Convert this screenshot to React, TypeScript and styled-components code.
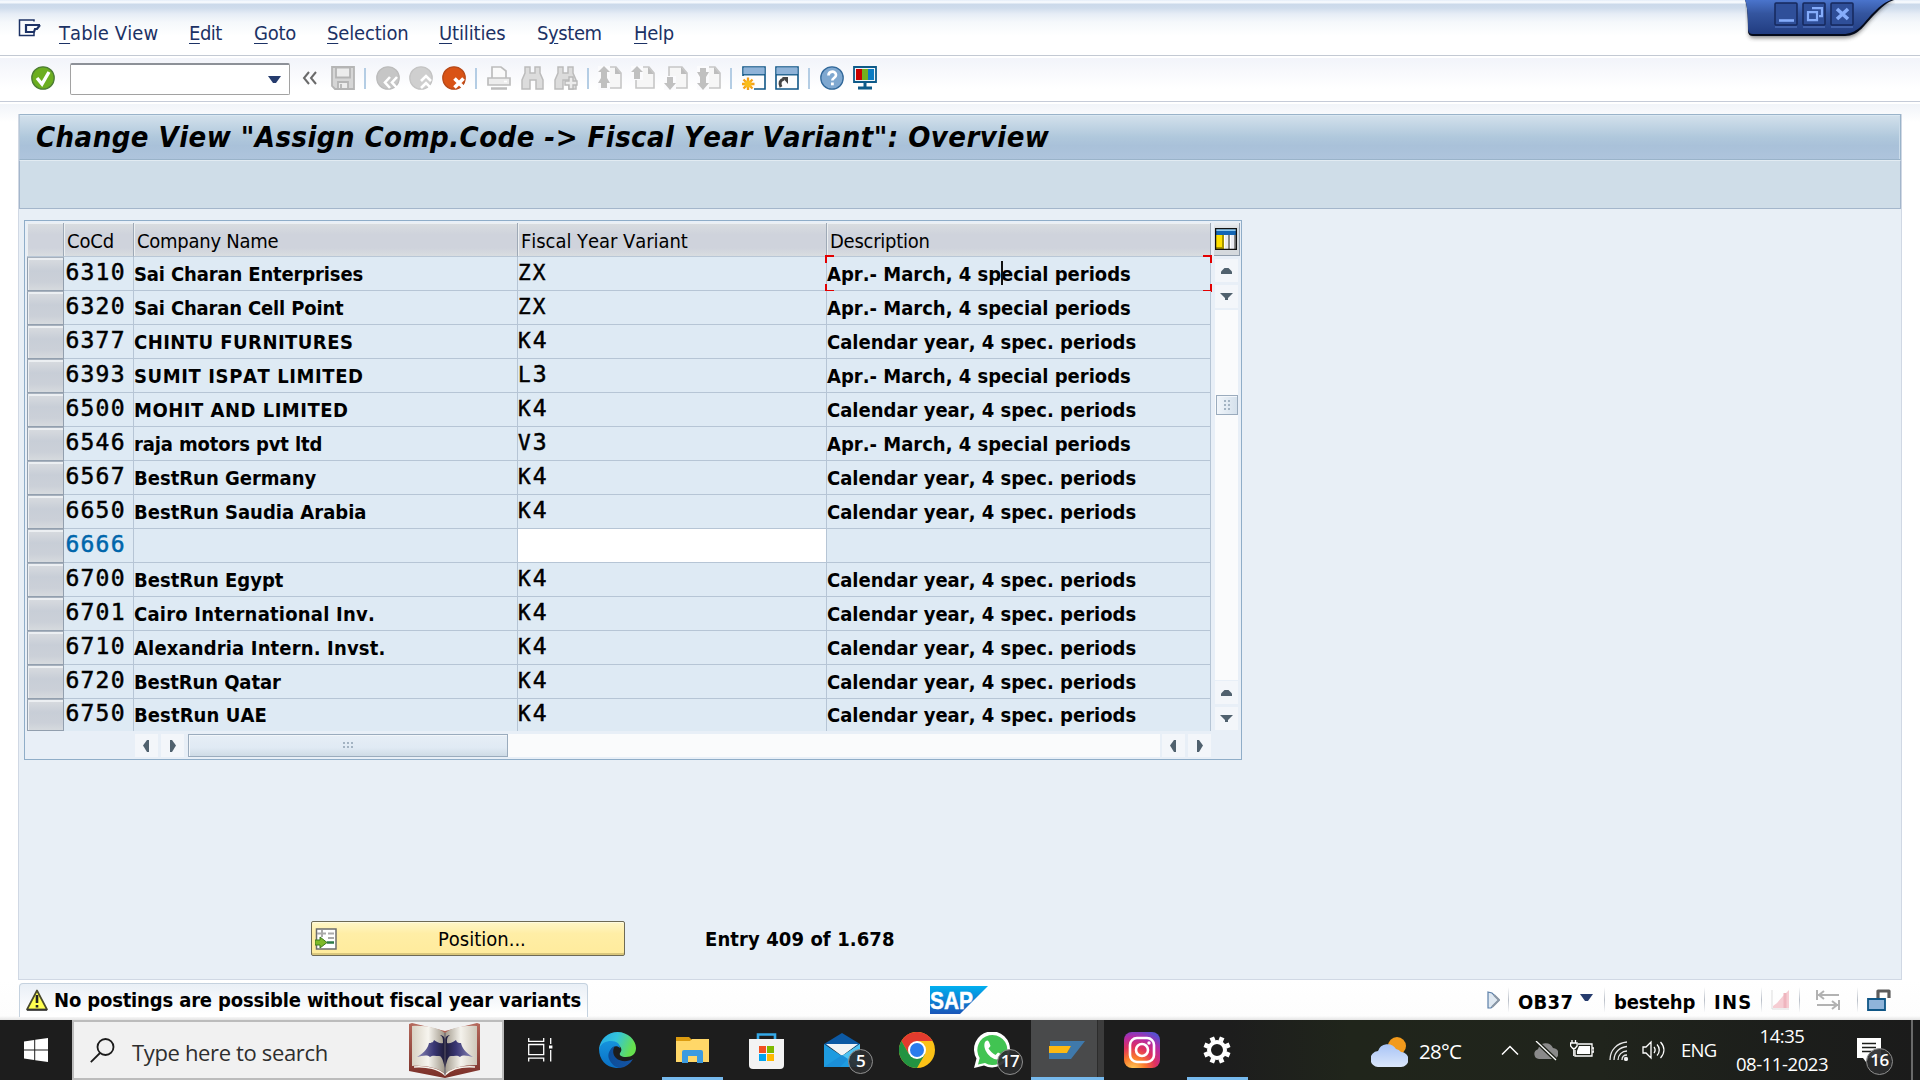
import React from 'react';
import styled, { createGlobalStyle, css } from 'styled-components';

const Global = createGlobalStyle`
  * { box-sizing: border-box; }
  html, body { margin: 0; padding: 0; }
  body { width: 1920px; height: 1080px; overflow: hidden; background: #fff; }
  svg { display: block; flex: none; }
`;

const ui = css`
  font-family: 'DejaVu Sans Condensed', 'DejaVu Sans', sans-serif;
  font-stretch: condensed;
  font-kerning: none;
  font-size: 20px;
  line-height: 24px;
  white-space: pre;
`;

const Screen = styled.div`
  position: relative;
  width: 1920px;
  height: 1080px;
  display: flex;
  flex-direction: column;
  overflow: hidden;
  ${ui}
  color: #000;
`;

/* ---------- menu bar ---------- */
const MenuBar = styled.nav`
  height: 58px;
  padding: 21px 0 0 18px;
  display: flex;
  border-bottom: 2px solid #fff;
  box-shadow: inset 0 -1px 0 #c3c9d3;
  background: linear-gradient(#dfe9f7 0, #f4f8fd 1px, #f4f8fd 3px, #cbd9ea 4px, #cfdcec 8px, #e6edf6 14px, #f5f8fb 22px, #fff 36px);
  color: #1c3265;
`;
const MenuIcon = styled.div`
  width: 41px;
  margin-top: -2px;
`;
const MenuItem = styled.span<{ $w: number; $ls: number }>`
  width: ${p => p.$w}px;
  letter-spacing: ${p => p.$ls}px;
  u { text-underline-offset: 3px; text-decoration-thickness: 1px; }
`;

/* ---------- standard toolbar ---------- */
const Toolbar = styled.div`
  height: 46px;
  padding: 0 0 4px 31px;
  display: flex;
  align-items: center;
  border-bottom: 2px solid #fff;
  box-shadow: inset 0 -1px 0 #c5cbd8;
  background: linear-gradient(#f2f4fa, #fff 70%);
`;
const CommandField = styled.div`
  width: 220px;
  height: 32px;
  margin: 1px 12px 0 15px;
  padding-right: 8px;
  display: flex;
  align-items: center;
  justify-content: flex-end;
  border: 1px solid #a2a2a2;
  border-top: 2px solid #8d9198;
  border-radius: 2px;
  background: #fff;
`;
const Tool = styled.div<{ $ml?: number }>`
  width: 24px;
  height: 24px;
  margin-left: ${p => p.$ml ?? 9}px;
`;
const Sep = styled.i`
  width: 2px;
  height: 21px;
  margin: 0 1px 0 9px;
  background: #b4cde4;
`;

/* ---------- work area ---------- */
const Work = styled.main`
  height: 876px;
  padding: 10px 18px 0 18px;
  background: linear-gradient(#f1f4f9, #fff 18px);
`;
const Panel = styled.section`
  width: 1884px;
  height: 866px;
  border: 1px solid #d0d8e4;
  border-top: 0;
  background: #e8eff6;
  display: flex;
  flex-direction: column;
`;
const Title = styled.h1`
  margin: 0;
  height: 46px;
  padding: 9px 0 0 16px;
  border: 1px solid #9ab3c9;
  border-left-color: #b7c8d8;
  box-shadow: inset 0 1px 0 #d9e7f2, inset -1px 0 0 #cbdcea;
  background: linear-gradient(#d3e1ec, #b0c8dc 50%, #a9c1d9 70%, #aec4dc);
  font-size: 29px;
  line-height: 26px;
  font-weight: bold;
  font-style: italic;
  letter-spacing: 0.45px;
`;
const AppBar = styled.div`
  height: 49px;
  border: 1px solid #a4b6cb;
  border-top-color: #e2ebf2;
  background: #cfdde8;
`;

/* ---------- table control ---------- */
const TableBox = styled.div`
  width: 1218px;
  height: 540px;
  margin: 11px 0 0 5px;
  padding: 2px 1px 0 2px;
  border: 1px solid #8fadc8;
  display: flex;
  background: #e8eff7;
`;
const TableMain = styled.div`
  width: 1184px;
`;
const Row = styled.div<{ $h?: number }>`
  display: grid;
  grid-template-columns: 37px 70px 384px 309px 384px;
  height: ${p => p.$h ?? 34}px;
`;
const Head = styled.div<{ $ls?: number }>`
  height: 34px;
  padding: 6px 0 0 3px;
  border-right: 1px solid #9ea9b6;
  border-bottom: 1px solid #b9c7d6;
  box-shadow: inset 1px 1px 0 #eceff1;
  background: linear-gradient(#d9dde0, #cfd3dc 35%, #cfd3dc 75%, #d9dde0);
  letter-spacing: ${p => p.$ls ?? -0.25}px;
`;
const Selector = styled.div`
  border: 1px solid #929fae;
  border-top-color: #a7b1bd;
  box-shadow: inset 1px 2px 0 #eceff2;
  background: linear-gradient(#d9dce0, #c8ced7 40%, #cbd0d8 75%, #d6dade);
`;
const Cell = styled.div<{ $white?: boolean; $last?: boolean; $ls?: number }>`
  position: relative;
  padding: ${p => (p.$last ? 4 : 5)}px 0 0 0;
  border-right: 1px solid #b6c5d5;
  border-bottom: ${p => (p.$last ? 0 : 1)}px solid #b6c5d5;
  background: ${p => (p.$white ? '#fff' : '#deeaf4')};
  font-weight: bold;
  letter-spacing: ${p => p.$ls ?? 0}px;
`;
const Code = styled(Cell)<{ $blue?: boolean; $pl?: number }>`
  padding: ${p => (p.$last ? 2 : 3)}px 0 0 ${p => p.$pl ?? 1}px;
  font: 23px/24px 'DejaVu Sans Mono', monospace;
  letter-spacing: 1.2px;
  color: ${p => (p.$blue ? '#0066ab' : '#000')};
  -webkit-text-stroke: 0.5px currentColor;
  span { font-size: 21px; letter-spacing: 2.1px; }
`;
const Corner = styled.i<{ $r?: boolean; $b?: boolean }>`
  position: absolute;
  width: 9px;
  height: 8px;
  ${p => (p.$r ? 'right: -2px; border-right: 2px solid #e30000;' : 'left: -2px; border-left: 2px solid #e30000;')}
  ${p => (p.$b ? 'bottom: -2px; border-bottom: 2px solid #e30000;' : 'top: -2px; border-top: 2px solid #e30000;')}
`;
const Caret = styled.i`
  position: absolute;
  left: 174px;
  top: 4px;
  width: 2px;
  height: 24px;
  background: #111;
`;
const HScroll = styled.div`
  height: 23px;
  margin: 3px 0 0 108px;
  display: flex;
  align-items: center;
`;
const Arrow = styled.div<{ $ml?: number; $mt?: number }>`
  width: 23px;
  height: 23px;
  margin-left: ${p => p.$ml ?? 0}px;
  margin-top: ${p => p.$mt ?? 0}px;
  padding: 3px 0 0 4px;
  background: #f3f6fa;
  flex: none;
`;
const HTrack = styled.div`
  width: 972px;
  height: 23px;
  margin-left: 4px;
  background: #fafbfc;
`;
const thumb = css`
  display: flex;
  align-items: center;
  justify-content: center;
  border: 1px solid #9aabbd;
  box-shadow: inset 1px 1px 0 #f2f6fa;
`;
const HThumb = styled.div`
  ${thumb}
  width: 320px;
  height: 23px;
  background: linear-gradient(#e6eef6, #e0eaf4 60%, #cedbe6);
`;
const VColumn = styled.div`
  width: 28px;
  margin-left: 3px;
`;
const Config = styled.div`
  width: 26px;
  height: 33px;
  padding: 5px 0 0 1px;
  border-right: 1px solid #929fae;
  border-bottom: 1px solid #929fae;
  background: linear-gradient(#eceff2, #d5d9dd 20%);
`;
const VTrack = styled.div`
  width: 23px;
  height: 370px;
  margin: 2px 0 0 1px;
  padding: 85px 0 0 1px;
  background: #fafbfc;
`;
const VThumb = styled.div`
  ${thumb}
  width: 22px;
  height: 20px;
  background: linear-gradient(90deg, #f0f5fa, #d5e1ec);
`;

/* ---------- footer of panel ---------- */
const Footer = styled.div`
  display: flex;
  margin: 161px 0 0 292px;
  align-items: center;
`;
const PositionButton = styled.div`
  width: 314px;
  height: 35px;
  padding-left: 3px;
  display: flex;
  align-items: center;
  border: 1px solid #6e6a55;
  border-radius: 2px;
  box-shadow: inset 0 1px 0 #fffbe0, inset 0 -2px 0 #d9c67c;
  background: linear-gradient(#fff6c8, #ffeea6 35%, #ffeb9c);
`;
const PositionText = styled.span`
  margin-left: 101px;
`;
const Entry = styled.b`
  margin-left: 80px;
  letter-spacing: 0.1px;
`;

/* ---------- status bar ---------- */
const StatusBar = styled.div`
  height: 40px;
  padding: 3px 0 0 19px;
  display: flex;
  background: linear-gradient(#fff, #fdfdfd 90%, #e4e4e4);
`;
const Message = styled.div`
  width: 569px;
  height: 34px;
  padding: 4px 0 0 6px;
  display: flex;
  border: 1px solid #c5d2df;
  border-bottom: 0;
  border-radius: 4px 4px 0 0;
  background: linear-gradient(#e9eff6, #fff 90%);
  font-weight: bold;
  letter-spacing: -0.16px;
  svg { margin: 1px 6px 0 0; }
`;
const SapSlot = styled.div`
  margin-left: 342px;
  padding-top: 3px;
`;
const StatusFields = styled.div`
  margin-left: 499px;
  height: 34px;
  display: flex;
  align-items: center;
  font-weight: bold;
`;
const Field = styled.span<{ $w: number; $ls?: number }>`
  width: ${p => p.$w}px;
  margin-top: 3px;
  letter-spacing: ${p => p.$ls ?? 0}px;
`;
const StatusSep = styled.i<{ $mr: number }>`
  width: 1px;
  height: 26px;
  margin-right: ${p => p.$mr}px;
  background: linear-gradient(#fff, #b9bfc8 50%, #fff);
`;
const IconSlot = styled.div<{ $w: number }>`
  width: ${p => p.$w}px;
`;

/* ---------- taskbar ---------- */
const Taskbar = styled.footer`
  height: 60px;
  display: flex;
  background: linear-gradient(90deg, #1d1d1d 0, #1d1d1d 1230px, #20251b 1350px, #20241c 1600px, #1c1e1b 1780px, #1b1b1b);
  color: #fff;
  font-family: 'Open Sans', 'Noto Sans', sans-serif;
  font-stretch: normal;
`;
const Start = styled.div`
  width: 72px;
  padding: 18px 0 0 24px;
`;
const Search = styled.div`
  width: 432px;
  height: 60px;
  padding-left: 16px;
  display: flex;
  align-items: center;
  border: 2px solid #bcbcbc;
  background: #f1f1f1;
  color: #2e2e2e;
  font-size: 22px;
`;
const SearchText = styled.span`
  width: 277px;
  margin: 3px 0 0 17px;
  letter-spacing: -0.35px;
`;
const TaskButton = styled.div<{ $w: number; $pl: number; $pt: number; $ml?: number; $open?: boolean; $active?: boolean }>`
  position: relative;
  width: ${p => p.$w}px;
  height: 60px;
  margin-left: ${p => p.$ml ?? 0}px;
  padding: ${p => p.$pt}px 0 0 ${p => p.$pl}px;
  border-bottom: ${p => (p.$open ? '3px solid #76b9ed' : '0')};
  background: ${p => (p.$active ? 'linear-gradient(90deg, #494a4b 66px, #2c2c2c 66px, #2c2c2c 67px, #3c3c3c 67px)' : 'none')};
`;
const Badge = styled.span<{ $x: number; $y: number; $s?: number }>`
  position: absolute;
  left: ${p => p.$x}px;
  top: ${p => p.$y}px;
  width: ${p => p.$s ?? 25}px;
  height: ${p => p.$s ?? 25}px;
  border: 1px solid #8f8f8f;
  border-radius: 50%;
  background: rgba(43, 45, 46, 0.92);
  color: #fff;
  font: 600 17px/22px 'Open Sans', sans-serif;
  letter-spacing: -0.5px;
  text-align: center;
`;
const Tray = styled.div<{ $w: number; $pt: number }>`
  width: ${p => p.$w}px;
  padding-top: ${p => p.$pt}px;
  font-size: 18.5px;
  letter-spacing: -0.7px;
`;
const Weather = styled(Tray)`
  font-size: 20.5px;
`;
const Clock = styled.div`
  width: 124px;
  padding: 2px 26px 0 0;
  font-size: 18.5px;
  line-height: 28px;
  letter-spacing: -0.45px;
  text-align: center;
`;
const Notify = styled.div`
  position: relative;
  width: 54px;
  padding-top: 18px;
`;
const ShowDesktop = styled.i`
  width: 2px;
  height: 60px;
  background: #6a6a6a;
`;

/* ---------- floating window controls ---------- */
const WindowControls = styled.div`
  position: absolute;
  right: 25px;
  top: 0;
`;

const Grip = () => (
  <svg width="10" height="9" viewBox="0 0 10 9" fill="#a3b3c2">
    {[0, 4, 8].map(x => [1, 5].map(y => <rect key={`${x}${y}`} x={x} y={y} width="2" height="2" />))}
  </svg>
);
const VGrip = () => (
  <svg width="8" height="10" viewBox="0 0 8 10" fill="#a3b3c2">
    {[1, 5].map(x => [0, 4, 8].map(y => <rect key={`${x}${y}`} x={x} y={y} width="2" height="2" />))}
  </svg>
);

const Tri = ({ d }: { d: 'u' | 'd' | 'l' | 'r' }) => {
  const p = { u: 'M5.500 6h4L13 9.500V12H2V9.500z', d: 'M1 5h13l-5 5v2H6v-2z', l: 'M4 8.500 8 3h2v12H8z', r: 'M11 8.500 7 3H5v12h2z' }[d];
  return <svg width="15" height="17" viewBox="0 0 15 17"><path d={p} fill="#50616e" /></svg>;
};

const Disc = ({ fill, stroke, children }: { fill: string; stroke: string; children?: React.ReactNode }) => (
  <svg width="24" height="24" viewBox="0 0 24 24">
    <circle cx="12" cy="12" r="11.2" fill={fill} stroke={stroke} strokeWidth="1.3" />
    {children}
  </svg>
);

/* Sheet with a folded corner; the arrows stand over its left edge. */
const PageIcon = ({ kind }: { kind: 'first' | 'prev' | 'next' | 'last' }) => {
  const clear = { first: 'M0 0h12v24H0z', prev: 'M0 0h12v14H0z', next: 'M0 10h12v14H0z', last: 'M0 0h12v24H0z' }[kind];
  const arrows = {
    first: 'M6 0 12 6H9v6l3 5H9v5H3v-5H0l3-5V6H0z',
    prev: 'M6 0 12 6H9v7H3V6H0z',
    next: 'M6 24 12 17H9v-6H3v6H0z',
    last: 'M3 2h6v4h3l-3 5v6h3l-6 7-6-7h3v-6L0 6h3z',
  }[kind];
  return (
    <svg width="24" height="24" viewBox="0 0 24 24">
      <path d="M5 1h13l5 6v15H5z" fill="#f6f6f6" stroke="#c6c6c6" strokeWidth="1.6" />
      <path d="M17 1v7h6z" fill="#bdbdbd" />
      <path d={clear} fill="#fbfbfd" />
      <path d={arrows} fill="#c0c0c0" />
    </svg>
  );
};

const Binoculars = ({ plus }: { plus?: boolean }) => (
  <svg width="24" height="24" viewBox="0 0 24 24">
    <path d="M4 1h5v6h5V1h5v6l3 7v9h-7v-9H9v9H1v-9l3-7z" fill="#dcdcdc" stroke="#bcbcbc" strokeWidth="1.5" />
    {plus && <path d="M15 11h4v4h4v4h-4v4h-4v-4h-4v-4h4z" fill="#ececec" stroke="#b8b8b8" strokeWidth="1.4" />}
  </svg>
);

const WindowIcon = ({ children }: { children: React.ReactNode }) => (
  <svg width="24" height="24" viewBox="0 0 24 24">
    <path d="M1 1h22v22H1z" fill="#fdfdfd" stroke="#0f5686" strokeWidth="1.6" />
    <path d="M1.5 1.5h21v7h-21z" fill="#8fb3d8" />
    <path d="M1 8.8h22" stroke="#0f5686" strokeWidth="1.3" />
    {children}
  </svg>
);

type RowData = { code: string; name: string; tracking?: number; variant: string; desc: string };
const apr = 'Apr.- March, 4 special periods';
const cal = 'Calendar year, 4 spec. periods';
const rows: RowData[] = [
  { code: '6310', name: 'Sai Charan Enterprises', tracking: -0.14, variant: 'ZX', desc: apr },
  { code: '6320', name: 'Sai Charan Cell Point', tracking: -0.16, variant: 'ZX', desc: apr },
  { code: '6377', name: 'CHINTU FURNITURES', tracking: 0.45, variant: 'K4', desc: cal },
  { code: '6393', name: 'SUMIT ISPAT LIMITED', tracking: 0.6, variant: 'L3', desc: apr },
  { code: '6500', name: 'MOHIT AND LIMITED', tracking: 0.5, variant: 'K4', desc: cal },
  { code: '6546', name: 'raja motors pvt ltd', tracking: -0.13, variant: 'V3', desc: apr },
  { code: '6567', name: 'BestRun Germany', variant: 'K4', desc: cal },
  { code: '6650', name: 'BestRun Saudia Arabia', variant: 'K4', desc: cal },
  { code: '6666', name: '', variant: '', desc: '' },
  { code: '6700', name: 'BestRun Egypt', variant: 'K4', desc: cal },
  { code: '6701', name: 'Cairo International Inv.', tracking: 0.22, variant: 'K4', desc: cal },
  { code: '6710', name: 'Alexandria Intern. Invst.', tracking: 0.15, variant: 'K4', desc: cal },
  { code: '6720', name: 'BestRun Qatar', tracking: -0.1, variant: 'K4', desc: cal },
  { code: '6750', name: 'BestRun UAE', tracking: 0.1, variant: 'K4', desc: cal },
];

const Variant = ({ value }: { value: string }) => {
  const letters = value.replace(/\d/g, '');
  return <><span>{letters}</span>{value.slice(letters.length)}</>;
};

const menus: [string, string, string, number, number][] = [
  ['', 'T', 'able View', 130, 0.1],
  ['', 'E', 'dit', 65, -0.5],
  ['', 'G', 'oto', 73, -0.25],
  ['', 'S', 'election', 112, -0.15],
  ['', 'U', 'tilities', 98, -0.15],
  ['S', 'y', 'stem', 97, -0.4],
  ['', 'H', 'elp', 60, -0.25],
];

export default function App() {
  return (
    <Screen>
      <Global />
      <MenuBar>
        <MenuIcon>
          <svg width="24" height="18" viewBox="0 0 24 18" fill="none" stroke="#1c3265">
            <path d="M16 2.5V1H1.5v15.5H16V14" strokeWidth="1.5" />
            <path d="M22 6H8v7h8l1-3h2l3-4" strokeWidth="2.2" />
          </svg>
        </MenuIcon>
        {menus.map(([a, b, c, w, ls]) => <MenuItem key={b} $w={w} $ls={ls}>{a}<u>{b}</u>{c}</MenuItem>)}
      </MenuBar>

      <Toolbar>
        <Tool $ml={0}>
          <Disc fill="#6cae20" stroke="#4d7d36"><path d="m6 12 5 6 7-12" fill="none" stroke="#fff" strokeWidth="3.4" /></Disc>
        </Tool>
        <CommandField>
          <svg width="13" height="7" viewBox="0 0 13 7"><path d="M0 0h13L8 7H5z" fill="#263c6e" /></svg>
        </CommandField>
        <svg width="15" height="14" viewBox="0 0 15 14" fill="none" stroke="#6a6a6a" strokeWidth="2"><path d="M7 1 2 7l5 6M14 1 9 7l5 6" /></svg>
        <Tool $ml={14}>
          <svg width="24" height="24" viewBox="0 0 24 24" fill="#ececec" stroke="#b5b5b5" strokeWidth="1.8">
            <path d="M1 1h22v22H4l-3-3z" fill="#d6d6d6" /><path d="M5 1.5h14v10H5zM7 16h10v7H7z" /><path d="M10 18v4" />
          </svg>
        </Tool>
        <Sep />
        <Tool>
          <Disc fill="#c6c6c6" stroke="#bcbcbc"><path d="m14 11-5 5.500 5 5.500M21 11l-5 5.500 5 5.500" fill="none" stroke="#fff" strokeWidth="2.600" /></Disc>
        </Tool>
        <Tool>
          <Disc fill="#cfcfcf" stroke="#c4c4c4"><path d="m12 15 5-5 5 5M12 22l5-5 5 5" fill="none" stroke="#fff" strokeWidth="2.600" /></Disc>
        </Tool>
        <Tool>
          <Disc fill="#d95315" stroke="#b74a1a"><path d="m12.500 12.500 9 9M21.500 12.500l-9 9" fill="none" stroke="#fff" strokeWidth="3.600" /></Disc>
        </Tool>
        <Sep />
        <Tool>
          <svg width="24" height="24" viewBox="0 0 24 24" fill="#ededed" stroke="#bdbdbd" strokeWidth="1.7">
            <path d="M5 12V1h9l5 4v7" fill="#fafafa" /><path d="M1 12h22v7H1z" /><path d="M4 22.500h16" strokeWidth="2.500" /><path d="M17 15.500h3" stroke="#fff" />
          </svg>
        </Tool>
        <Tool $ml={10}><Binoculars /></Tool>
        <Tool><Binoculars plus /></Tool>
        <Sep />
        <Tool $ml={8}><PageIcon kind="first" /></Tool>
        <Tool><PageIcon kind="prev" /></Tool>
        <Tool><PageIcon kind="next" /></Tool>
        <Tool><PageIcon kind="last" /></Tool>
        <Sep />
        <Tool>
          <WindowIcon>
            <path d="M0 10h12v14H0z" fill="#fdfdfd" />
            <path d="M6 11.500v13M-.5 18h13M1.500 13.500l9 9M10.500 13.500l-9 9" stroke="#f5a016" strokeWidth="2.300" />
            <circle cx="6" cy="18" r="3.600" fill="#f9bd1c" />
          </WindowIcon>
        </Tool>
        <Tool>
          <WindowIcon>
            <path d="M6 21c-2-4-1-7 3-8" fill="none" stroke="#444" strokeWidth="3" /><path d="M7 11h6v7z" fill="#444" />
          </WindowIcon>
        </Tool>
        <Sep />
        <Tool>
          <Disc fill="#7fa8d0" stroke="#33699a">
            <path d="M8.500 9.500c0-5 7.500-5 7.500-.5 0 3-3.700 3-3.700 5.500" fill="none" stroke="#fff" strokeWidth="2.700" />
            <rect x="11" y="16.500" width="2.800" height="2.800" fill="#fff" />
          </Disc>
        </Tool>
        <Tool>
          <svg width="24" height="24" viewBox="0 0 24 24">
            <path d="M1 1h22v15H1z" fill="#f0f5f8" stroke="#0d5a89" strokeWidth="1.800" />
            <path d="M3 3h6v11H3z" fill="#c80000" /><path d="M9 3h6v11H9z" fill="#74b01e" /><path d="M15 3h6v11h-6z" fill="#0a7cc4" />
            <path d="M12 16v5M5 22h14" stroke="#0d5a89" strokeWidth="3" />
          </svg>
        </Tool>
      </Toolbar>

      <Work>
        <Panel>
          <Title>Change View "Assign Comp.Code -&gt; Fiscal Year Variant": Overview</Title>
          <AppBar />
          <TableBox>
            <TableMain>
              <Row>
                <Head />
                <Head $ls={-0.1}>CoCd</Head>
                <Head>Company Name</Head>
                <Head $ls={-0.05}>Fiscal Year Variant</Head>
                <Head>Description</Head>
              </Row>
              {rows.map(({ code, name, tracking, variant, desc }, i) => {
                const last = i === rows.length - 1;
                const open = code === '6666';
                return (
                  <Row key={code} $h={last ? 32 : 34}>
                    <Selector />
                    <Code $last={last} $blue={open} $pl={1.5}>{code}</Code>
                    <Cell $last={last} $ls={tracking}>{name}</Cell>
                    <Code $last={last} $white={open} $pl={0}><Variant value={variant} /></Code>
                    <Cell $last={last}>
                      {desc}
                      {i === 0 && <><Corner /><Corner $r /><Corner $b /><Corner $r $b /><Caret /></>}
                    </Cell>
                  </Row>
                );
              })}
              <HScroll>
                <Arrow><Tri d="l" /></Arrow>
                <Arrow $ml={3}><Tri d="r" /></Arrow>
                <HTrack><HThumb><Grip /></HThumb></HTrack>
                <Arrow $ml={2}><Tri d="l" /></Arrow>
                <Arrow $ml={3}><Tri d="r" /></Arrow>
              </HScroll>
            </TableMain>
            <VColumn>
              <Config>
                <svg width="22" height="22" viewBox="0 0 22 22">
                  <path d="M0 0h22v22H0z" fill="#fff" /><path d="M1 1h20v2H1z" fill="#8cc8f0" /><path d="M1 3h20v4H1z" fill="#1466b4" />
                  <path d="M1 7h6v13H1z" fill="#ffe000" /><path d="M7 7h2v14H7zM1 19h7v2H1z" fill="#a89600" />
                  <path d="M10 7h4v14h-4zM16 7h3v14h-3z" fill="#ececf2" /><path d="M13 7h2v14h-2zM19 7h2v14h-2z" fill="#8a8a8a" />
                  <path d="M.6.600h20.800v20.800H.6z" fill="none" stroke="#111" strokeWidth="1.300" />
                </svg>
              </Config>
              <Arrow $ml={1} $mt={3}><Tri d="u" /></Arrow>
              <Arrow $ml={1} $mt={3}><Tri d="d" /></Arrow>
              <VTrack><VThumb><VGrip /></VThumb></VTrack>
              <Arrow $ml={1} $mt={1}><Tri d="u" /></Arrow>
              <Arrow $ml={1} $mt={3}><Tri d="d" /></Arrow>
            </VColumn>
          </TableBox>
          <Footer>
            <PositionButton>
              <svg width="22" height="22" viewBox="0 0 22 22">
                <path d="M1.500 1h19.500v20H1.500z" fill="#fff" stroke="#6c6c6c" strokeWidth="1.500" />
                <path d="M2 5.500h9M7 2v7M13 5.500h6M13 10h6" stroke="#aaa" strokeWidth="2" />
                <path d="M12 14.500h7" stroke="#2d7a46" strokeWidth="2.500" />
                <path d="M0 12h5V9l7 5.500L5 20v-3H0z" fill="#7db928" stroke="#3d7a1c" />
              </svg>
              <PositionText>Position...</PositionText>
            </PositionButton>
            <Entry>Entry 409 of 1.678</Entry>
          </Footer>
        </Panel>
      </Work>

      <StatusBar>
        <Message>
          <svg width="22" height="22" viewBox="0 0 22 22">
            <path d="M11 1.500 21 20.500H1z" fill="#ffff50" stroke="#4a4a2a" strokeWidth="1.700" strokeLinejoin="round" />
            <path d="M1 20.800h20" stroke="#333" strokeWidth="2" /><path d="M11 6v8M11 16v2.500" stroke="#222" strokeWidth="2.600" />
          </svg>
          No postings are possible without fiscal year variants
        </Message>
        <SapSlot>
          <svg width="58" height="28" viewBox="0 0 58 28">
            <defs><linearGradient id="sap" x2="0" y2="1"><stop stopColor="#00b0f0" /><stop offset="1" stopColor="#1a55b8" /></linearGradient></defs>
            <path d="M0 0h58L30 28H0z" fill="url(#sap)" />
            <text x="0" y="22.500" fontFamily="Liberation Sans, sans-serif" fontSize="24" fontWeight="bold" fill="#fff" stroke="#fff" strokeWidth=".5" textLength="43" lengthAdjust="spacingAndGlyphs">SAP</text>
          </svg>
        </SapSlot>
        <StatusFields>
          <IconSlot $w={21}>
            <svg width="13" height="18" viewBox="0 0 13 18"><path d="M1 1l4 1 7 7-8 8H1z" fill="#dfe8f1" stroke="#5b7fa8" strokeWidth="1.200" /><path d="M5 16l7-7-5-5" fill="none" stroke="#8a97a5" strokeWidth="2" /></svg>
          </IconSlot>
          <StatusSep $mr={9} />
          <Field $w={62} $ls={0.3}>OB37</Field>
          <IconSlot $w={24}><svg width="13" height="16" viewBox="0 0 13 16"><path d="M0 2h13L8 9H5z" fill="#263c6e" /></svg></IconSlot>
          <StatusSep $mr={9} />
          <Field $w={90} $ls={-0.15}>bestehp</Field>
          <StatusSep $mr={9} />
          <Field $w={47} $ls={1.3}>INS</Field>
          <StatusSep $mr={9} />
          <IconSlot $w={28}>
            <svg width="18" height="20" viewBox="0 0 18 20"><path d="M1 0v19h17" fill="none" stroke="#ddd" /><path d="M2 18h4v-5L2 16zM6 18h6V6l-6 7zM12 18h6V0l-6 6z" fill="#f6cdd3" /><path d="M14 3v15" stroke="#efb5be" strokeWidth="3" /></svg>
          </IconSlot>
          <StatusSep $mr={16} />
          <IconSlot $w={41}>
            <svg width="24" height="20" viewBox="0 0 24 20" fill="none" stroke="#b2b2b2" strokeWidth="2"><path d="M1 0v10M2 5h21M8 1 3 5l5 4M23 10v10M1 15h21M16 11l5 4-5 4" /></svg>
          </IconSlot>
          <StatusSep $mr={9} />
          <svg width="24" height="22" viewBox="0 0 24 22"><path d="M11 10V2h11v7" fill="none" stroke="#5c5c5c" strokeWidth="3.200" strokeLinejoin="round" /><path d="M1 10h17v11H1z" fill="#8fb4da" stroke="#0f5686" strokeWidth="1.800" /></svg>
        </StatusFields>
      </StatusBar>

      <Taskbar>
        <Start>
          <svg width="24" height="24" viewBox="0 0 24 24" fill="#fff"><path d="M0 3.400 10.200 2v9.400H0zM11.200 1.800 24 0v11.400H11.200zM0 12.500h10.200V22L0 20.600zM11.200 12.500H24V24l-12.800-1.800z" /></svg>
        </Start>
        <Search>
          <svg width="25" height="25" viewBox="0 0 25 25" fill="none" stroke="#1b1b1b" strokeWidth="1.800"><circle cx="15.500" cy="9" r="8" /><path d="M10 15 .8 24.200" /></svg>
          <SearchText>Type here to search</SearchText>
          <svg width="72" height="55" viewBox="0 0 72 55">
            <defs>
              <linearGradient id="pg"><stop stopColor="#d8d2c4" /><stop offset=".25" stopColor="#f7f5ef" /><stop offset=".5" stopColor="#a0988a" /><stop offset=".75" stopColor="#f4f2ec" /><stop offset="1" stopColor="#cfc8ba" /></linearGradient>
              <linearGradient id="ink"><stop stopColor="#8d8bb8" /><stop offset=".3" stopColor="#3a3775" /><stop offset=".5" stopColor="#1d1b38" /><stop offset=".7" stopColor="#3a3775" /><stop offset="1" stopColor="#8d8bb8" /></linearGradient>
              <linearGradient id="cover" x2="0" y2="1"><stop stopColor="#b5695c" /><stop offset="1" stopColor="#7a2f28" /></linearGradient>
            </defs>
            <path d="M0 1 3 0l33 8L68 0l3 1v46L36 55 0 48z" fill="url(#cover)" />
            <path d="M3 3c14-1 27 2 33 7C42 5 54 2 68 3v39c-14 0-26 3-32 9C30 45 17 42 3 43z" fill="url(#pg)" />
            <path d="M5 44c13-1 25 2 31 8 6-6 17-9 30-8" fill="none" stroke="#f6f3ec" strokeWidth="1.500" />
            <path d="M36 16c-1-3-3-4-5-4 3 2 3 4 3 8-3 1-6-1-9-3-1 3-3 3-5 3-1 5-4 9-12 14 5-1 10-3 13 0 2-2 6-1 9-1 2 0 3 2 4 5l2 7 2-7c1-3 2-5 4-5 3 0 7-1 9 1 3-3 8-1 13 0-8-5-11-9-12-14-2 0-4 0-5-3-3 2-6 4-9 3 0-4 0-6 3-8-2 0-4 1-5 4z" fill="url(#ink)" />
            <path d="M36 10v42" stroke="#5f5968" strokeWidth="1" />
          </svg>
        </Search>
        <TaskButton $w={94} $pl={24} $pt={18}>
          <svg width="25" height="24" viewBox="0 0 25 24" fill="none" stroke="#fff" strokeWidth="1.300"><path d="M.7 0v3.300h15V0M.7 23.500v-3.300h15v3.300M.7 6.500h15v10.200H.7zM22.700 0v6M22.700 12v11.500" /><path d="M21 9h3.400" strokeWidth="3" /></svg>
        </TaskButton>
        <TaskButton $w={64} $pl={1} $pt={12}>
          <svg width="37" height="36" viewBox="0 0 37 36">
            <defs>
              <linearGradient id="e1" x1="0" x2="1" y2=".3"><stop stopColor="#23a7e8" /><stop offset=".5" stopColor="#34c4dc" /><stop offset="1" stopColor="#66e04e" /></linearGradient>
              <linearGradient id="e2" x2="0" y2="1"><stop stopColor="#1593dd" /><stop offset="1" stopColor="#0a6fc4" /></linearGradient>
              <linearGradient id="e3"><stop stopColor="#0c4c97" /><stop offset="1" stopColor="#1555a6" /></linearGradient>
            </defs>
            <path d="M0 17C1 7 9 0 18.500 0 29 0 37 8 37 16c0 6-4 9-10 9-5 0-7-2-6-4 3-3 1-8-4-8z" fill="url(#e1)" />
            <path d="M0 17C2 11 7 9 12 9c6 0 9 3 9 7-4-4-10-1-10 6 0 6 4 11 10 14C9 37 0 29 0 17z" fill="url(#e2)" />
            <path d="M16 14c-5 2-8 8-6 13 2 5 7 9 11 9 6-1 10-4 13-9-5 3-13 3-17-1-3-3-4-8-1-12z" fill="url(#e3)" />
          </svg>
        </TaskButton>
        <TaskButton $w={61} $pl={14} $pt={16} $open>
          <svg width="33" height="28" viewBox="0 0 33 28"><path d="M0 1h13l3 3v6H0z" fill="#dc9b10" /><path d="M0 5h14l2-2h17v23H0z" fill="#ffd768" /><path d="M6 26V16q0-2 2-2h17q2 0 2 2v11h-6v-7h-9v7H6z" fill="#3c9be0" /></svg>
        </TaskButton>
        <TaskButton $w={75} $ml={12} $pl={14} $pt={13}>
          <svg width="35" height="36" viewBox="0 0 35 36"><path d="M9 8V1.500h17V8" fill="none" stroke="#35a9e8" strokeWidth="2.600" /><path d="M0 6h35v26q0 4-4 4H4q-4 0-4-4z" fill="#f3f3f3" /><path d="M10 13h7v7h-7z" fill="#f25022" /><path d="M18 13h7v7h-7z" fill="#7fba00" /><path d="M10 21h7v7h-7z" fill="#00a4ef" /><path d="M18 21h7v7h-7z" fill="#ffb900" /></svg>
        </TaskButton>
        <TaskButton $w={75} $pl={14} $pt={13}>
          <svg width="36" height="34" viewBox="0 0 36 34"><path d="M0 11 18 0l18 11-18 10z" fill="#0c59a4" /><path d="M2 11h32L18 23z" fill="#f2f4f6" /><path d="M0 11l18 12 18-12v23H0z" fill="#1e9be0" /><path d="M18 23 36 11v23z" fill="#50c3f2" /><path d="M0 34 18 22l6 4-8 8z" fill="#1b8fd8" /></svg>
          <Badge $x={38} $y={29}>5</Badge>
        </TaskButton>
        <TaskButton $w={75} $pl={14} $pt={12}>
          <svg width="36" height="36" viewBox="0 0 36 36"><circle cx="18" cy="18" r="18" fill="#fbc116" /><path d="M2.400 9A18 18 0 0 1 33.600 9H18L10 22z" fill="#e33b2e" /><path d="M2.400 9A18 18 0 0 0 18 36l8-14H10z" fill="#229342" /><circle cx="18" cy="18" r="9" fill="#fff" /><circle cx="18" cy="18" r="7" fill="#2a7cec" /></svg>
        </TaskButton>
        <TaskButton $w={71} $pl={14} $pt={12}>
          <svg width="37" height="36" viewBox="0 0 37 36"><path d="M0 36 2.500 26.500A18 18 0 1 1 10 33.500z" fill="#fff" /><path d="m4 32.500 1.700-6.500A15 15 0 1 1 11 31z" fill="#41c452" /><path d="M11 10c2-2 3-2 4 0l1.500 4-2 2.500c2 3 4 5 7 6.500l2.500-2.500 4 2c1 1-1 5-5 5C16 27 8 17 11 10z" fill="#fff" /></svg>
          <Badge $x={37} $y={29} $s={26}>17</Badge>
        </TaskButton>
        <TaskButton $w={73} $pl={18} $pt={21} $open $active>
          <svg width="36" height="18" viewBox="0 0 36 18"><path d="M1 0h35L22 18H0v-6h18l4-7H1z" fill="#3f79ab" /><path d="M0 5h22l-4 7H0z" fill="#fdb913" /></svg>
        </TaskButton>
        <TaskButton $w={83} $pl={20} $pt={12}>
          <svg width="36" height="36" viewBox="0 0 36 36">
            <defs><radialGradient id="ig" cx=".25" cy="1.050" r="1.150"><stop stopColor="#ffd05a" /><stop offset=".3" stopColor="#fa7a2c" /><stop offset=".55" stopColor="#e0315f" /><stop offset=".8" stopColor="#b32ba8" /><stop offset="1" stopColor="#5a4fd0" /></radialGradient></defs>
            <rect width="36" height="36" rx="8" fill="url(#ig)" /><g fill="none" stroke="#fff" strokeWidth="2.600"><rect x="6" y="6" width="24" height="24" rx="7" /><circle cx="18" cy="18" r="6" /></g><circle cx="25" cy="11" r="1.700" fill="#fff" />
          </svg>
        </TaskButton>
        <TaskButton $w={61} $pl={16} $pt={16} $open>
          <svg width="28" height="28" viewBox="-14 -14 28 28" fill="none" stroke="#fff"><circle r="8" strokeWidth="4" /><g strokeWidth="4.800">{[22.5, 67.5, 112.5, 157.5, 202.5, 247.5, 292.5, 337.5].map(a => <path key={a} transform={`rotate(${a})`} d="M0-9.300V-13.600" />)}</g></svg>
        </TaskButton>
        <TaskButton $w={171} $pl={123} $pt={16}>
          <svg width="37" height="31" viewBox="0 0 37 31"><defs><linearGradient id="cl" x2="0" y2="1"><stop stopColor="#a8c4f6" /><stop offset="1" stopColor="#dbe7fb" /></linearGradient></defs><circle cx="26" cy="10" r="9" fill="#f29a1c" /><path d="M8 31a8 8 0 0 1-1-16 10 10 0 0 1 18-2 8 8 0 0 1 5 3 7.500 7.500 0 0 1 0 15z" fill="url(#cl)" /></svg>
        </TaskButton>
        <Weather $w={82} $pt={19}>28°C</Weather>
        <Tray $w={33} $pt={25}><svg width="18" height="10" viewBox="0 0 18 10" fill="none" stroke="#fff" strokeWidth="1.500"><path d="m1 9.500 8-8 8 8" /></svg></Tray>
        <Tray $w={36} $pt={21}><svg width="24" height="20" viewBox="0 0 24 20"><path d="M5 18a5 5 0 0 1-1-9.800A8 8 0 0 1 19 7a5.500 5.500 0 0 1 0 11z" fill="#8a8a8a" /><path d="m2 0 20 19" stroke="#1e2219" strokeWidth="4" /><path d="m2 0 20 19" stroke="#fff" strokeWidth="1.300" /></svg></Tray>
        <Tray $w={39} $pt={20}><svg width="24" height="18" viewBox="0 0 24 18" fill="none" stroke="#fff" strokeWidth="1.300"><path d="M8 4h14v12H5v-6M22 8h2v4h-2" /><path d="M9 6h11v8H7v-3z" fill="#fff" stroke="none" /><path d="M2 0v3M5.500 0v3M.6 3h6.500v3L5 8.500H2.800L.6 6zM3.800 8.500V16" /></svg></Tray>
        <Tray $w={33} $pt={21}><svg width="20" height="20" viewBox="0 0 20 20" fill="none" stroke="#e8e8e8" strokeWidth="1.300"><path d="M1 19C1 9 8 2 18 1M5 19C5 11 11 6 18 5.500M9 19c0-5 4-9 9-9M13 19c0-3 2-5 5-5" /><circle cx="17" cy="18" r="1.500" fill="#fff" /></svg></Tray>
        <Tray $w={39} $pt={20}><svg width="24" height="20" viewBox="0 0 24 20" fill="none" stroke="#fff" strokeWidth="1.300"><path d="M1 7h3l5-5v16l-5-5H1zM12 7c1.500 2 1.500 4 0 6M15 4.500c3 3 3 8 0 11M18.500 2c4.500 5 4.500 11 0 16" /></svg></Tray>
        <Tray $w={52} $pt={18}>ENG</Tray>
        <Clock>14:35<br />08-11-2023</Clock>
        <Notify>
          <svg width="24" height="25" viewBox="0 0 24 25"><path d="M0 0h24v20H12l-3 4-3-4H0z" fill="#fff" /><path d="M5 5.500h14M5 9.500h14M5 13.500h10" stroke="#1c1e1b" strokeWidth="1.300" /></svg>
          <Badge $x={9} $y={28} $s={27}>16</Badge>
        </Notify>
        <ShowDesktop />
      </Taskbar>

      <WindowControls>
        <svg width="150" height="44" viewBox="0 0 150 44">
          <defs><linearGradient id="wc" x2="0" y2="1"><stop stopColor="#4a74cc" /><stop offset=".4" stopColor="#34559f" /><stop offset="1" stopColor="#213c80" /></linearGradient>
            <filter id="sh" x="-10%" y="-10%" width="120%" height="140%"><feGaussianBlur stdDeviation="2" /></filter></defs>
          <path d="M1 0Q4 8 4 34q0 4 5 4h90c15 0 20-12 30-22 8-8 14-14 21-16z" fill="#333" opacity=".6" filter="url(#sh)" />
          <path d="M0 0q3 6 3 31 0 5 5 5h92c14 0 20-12 29-21 8-8 13-13 20-15z" fill="#050b1c" />
          <path d="M0 0q3 6 3 29 0 5 5 5h90c14 0 20-10 28-19 8-8 12-12 20-15z" fill="url(#wc)" />
          <g fill="#2f4f99" stroke="#16295c" strokeWidth="1.500"><rect x="30" y="3" width="22" height="22" rx="1" /><rect x="58" y="3" width="22" height="22" rx="1" /><rect x="86" y="3" width="22" height="22" rx="1" /></g>
          <path d="M30 27h22M58 27h22M86 27h22" stroke="#4a69b4" strokeWidth="1.500" />
          <g fill="none" stroke="#86adfb" strokeWidth="2.600"><path d="M34 20.500h15" /><path d="M67 8.200h10v8h-3M63 12.200h9v8h-9z" strokeWidth="2.200" /><path d="m92 9 11 10M103 9 92 19" strokeWidth="3.600" /></g>
        </svg>
      </WindowControls>
    </Screen>
  );
}
